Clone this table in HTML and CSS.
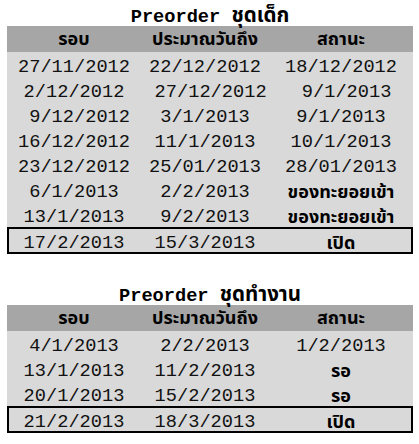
FILE: index.html
```html
<!DOCTYPE html>
<html lang="th">
<head>
<meta charset="utf-8">
<title>Preorder</title>
<link rel="stylesheet" href="styles.css">
</head>
<body>
<div class="sheet">
  <div class="title"><span class="en">Preorder </span><span class="th">ชุดเด็ก</span></div>
  <table class="grid">
    <colgroup><col class="c1"><col class="c2"><col class="c3"></colgroup>
    <thead>
      <tr><th>รอบ</th><th>ประมาณวันถึง</th><th>สถานะ</th></tr>
    </thead>
    <tbody>
      <tr><td>27/11/2012</td><td>22/12/2012</td><td>18/12/2012</td></tr>
      <tr><td>2/12/2012</td><td> 27/12/2012</td><td> 9/1/2013</td></tr>
      <tr><td> 9/12/2012</td><td>3/1/2013</td><td>9/1/2013</td></tr>
      <tr><td>16/12/2012</td><td>11/1/2013</td><td>10/1/2013</td></tr>
      <tr><td>23/12/2012</td><td>25/01/2013</td><td>28/01/2013</td></tr>
      <tr><td>6/1/2013</td><td>2/2/2013</td><td class="th">ของทะยอยเข้า</td></tr>
      <tr><td>13/1/2013</td><td>9/2/2013</td><td class="th">ของทะยอยเข้า</td></tr>
      <tr class="open"><td>17/2/2013</td><td>15/3/2013</td><td class="th">เปิด</td></tr>
    </tbody>
  </table>

  <div class="title second"><span class="en">Preorder </span><span class="th">ชุดทำงาน</span></div>
  <table class="grid">
    <colgroup><col class="c1"><col class="c2"><col class="c3"></colgroup>
    <thead>
      <tr><th>รอบ</th><th>ประมาณวันถึง</th><th>สถานะ</th></tr>
    </thead>
    <tbody>
      <tr><td>4/1/2013</td><td>2/2/2013</td><td>1/2/2013</td></tr>
      <tr><td>13/1/2013</td><td>11/2/2013</td><td class="th">รอ</td></tr>
      <tr><td>20/1/2013</td><td>15/2/2013</td><td class="th">รอ</td></tr>
      <tr class="open"><td>21/2/2013</td><td>18/3/2013</td><td class="th">เปิด</td></tr>
    </tbody>
  </table>
</div>
</body>
</html>
```

FILE: styles.css
```css
html, body {
  margin: 0;
  padding: 0;
  background: #ffffff;
}

.sheet {
  padding-left: 7px;
  width: 406px;
  color: #000;
}

.title {
  height: 26px;
  box-sizing: border-box;
  padding-top: 5px;
  line-height: 21px;
  text-align: center;
  white-space: pre;
  font-family: "Liberation Mono", "Courier New", monospace;
  font-size: 18.67px;
}

.title.second {
  margin-top: 25px;
}

.en {
  font-family: "Liberation Mono", "Courier New", monospace;
  font-weight: bold;
  font-size: 18.67px;
}

.th {
  font-family: "Tahoma", "Noto Sans Thai", "Loma", "Garuda", "Noto Sans", sans-serif;
  font-weight: bold;
}

.title .th {
  font-size: 20.5px;
}

.grid {
  width: 406px;
  border-collapse: separate;
  border-spacing: 0;
  table-layout: fixed;
}

.c1 { width: 134px; }
.c2 { width: 128px; }
.c3 { width: 144px; }

.grid th {
  background: #a6a6a6;
  height: 26px;
  padding: 0 0 2px 0;
  font-family: "Tahoma", "Noto Sans Thai", "Loma", "Garuda", "Noto Sans", sans-serif;
  font-weight: bold;
  font-size: 18px;
  line-height: 20px;
  text-align: center;
  vertical-align: bottom;
  box-sizing: border-box;
}

.grid td {
  background: #d9d9d9;
  height: 25px;
  padding: 0;
  font-family: "Liberation Mono", "Courier New", monospace;
  font-size: 18.67px;
  line-height: 19px;
  text-align: center;
  vertical-align: bottom;
  white-space: pre;
  box-sizing: border-box;
  color: #111;
}

.grid td.th {
  font-family: "Tahoma", "Noto Sans Thai", "Loma", "Garuda", "Noto Sans", sans-serif;
  font-weight: bold;
  font-size: 18px;
  color: #000;
}

.grid tr.open td {
  height: 27px;
  padding-bottom: 1px;
  box-shadow: inset 0 2px 0 #000, inset 0 -2px 0 #000;
}

.grid tr.open td:first-child {
  box-shadow: inset 0 2px 0 #000, inset 0 -2px 0 #000, inset 2px 0 0 #000;
}

.grid tr.open td:last-child {
  box-shadow: inset 0 2px 0 #000, inset 0 -2px 0 #000, inset -2px 0 0 #000;
}
```
